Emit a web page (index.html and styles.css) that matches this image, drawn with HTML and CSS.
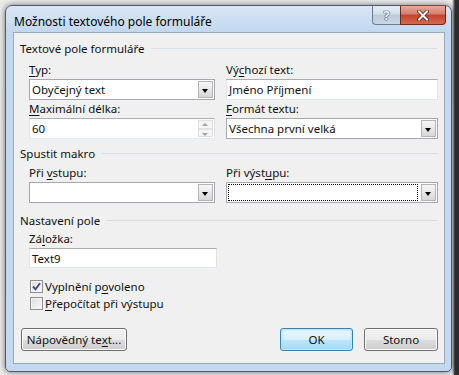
FILE: index.html
```html
<!DOCTYPE html>
<html lang="cs">
<head>
  <meta charset="UTF-8">
  <meta name="viewport" content="width=device-width, initial-scale=1.0">
  <title>Možnosti textového pole formuláře</title>
  <link rel="stylesheet" href="styles.css">
</head>
<body>

  <div class="window">
    <div class="titlebar">
      <span class="title">Možnosti textového pole formuláře</span>
      <div class="caption-buttons">
        <span class="cap-btn help">?</span>
        <span class="cap-btn close">
          <svg width="12" height="11" viewBox="0 0 12 11">
            <path d="M2 1.5 L10 9.5 M10 1.5 L2 9.5" stroke="#5a1a12" stroke-width="3.6" stroke-linecap="square" fill="none"/>
            <path d="M2 1.5 L10 9.5 M10 1.5 L2 9.5" stroke="#fff" stroke-width="2" stroke-linecap="square" fill="none"/>
          </svg>
        </span>
      </div>
    </div>

    <div class="client">
      <div class="group-title">Textové pole formuláře</div>
      <div class="grid first">
        <div class="field">
          <div class="label"><u>T</u>yp:</div>
          <div class="combo">
            <span class="value">Obyčejný text</span>
            <span class="drop"></span>
          </div>
        </div>
        <div class="field">
          <div class="label">Vý<u>c</u>hozí text:</div>
          <div class="textbox"><span class="value">Jméno Příjmení</span></div>
        </div>
        <div class="field">
          <div class="label"><u>M</u>aximální délka:</div>
          <div class="textbox spin">
            <span class="value">60</span>
            <span class="spin-btns">
              <span class="arrow up"></span>
              <span class="arrow down"></span>
            </span>
          </div>
        </div>
        <div class="field">
          <div class="label"><u>F</u>ormát textu:</div>
          <div class="combo">
            <span class="value">Všechna první velká</span>
            <span class="drop"></span>
          </div>
        </div>
      </div>

      <div class="group-title">Spustit makro</div>
      <div class="grid macro">
        <div class="field">
          <div class="label">Při <u>v</u>stupu:</div>
          <div class="combo">
            <span class="value"></span>
            <span class="drop"></span>
          </div>
        </div>
        <div class="field">
          <div class="label">Při výst<u>u</u>pu:</div>
          <div class="combo">
            <span class="value focused"></span>
            <span class="drop"></span>
          </div>
        </div>
      </div>

      <div class="group-title">Nastavení pole</div>
      <div class="grid settings">
        <div class="field">
          <div class="label">Zá<u>l</u>ožka:</div>
          <div class="textbox short"><span class="value">Text9</span></div>
        </div>
      </div>

      <div class="checks">
        <div class="check">
          <span class="box checked">
            <svg width="9" height="9" viewBox="0 0 9 9">
              <path d="M1 4.5 L3.5 7.2 L8 1.2" stroke="#3b4f86" stroke-width="1.9" fill="none"/>
            </svg>
          </span>
          <span>Vyplnění p<u>o</u>voleno</span>
        </div>
        <div class="check">
          <span class="box"></span>
          <span><u>P</u>řepočítat při výstupu</span>
        </div>
      </div>

      <div class="buttons">
        <span class="btn help-text">Nápovědný te<u>x</u>t...</span>
        <span class="spacer"></span>
        <span class="btn default">OK</span>
        <span class="btn">Storno</span>
      </div>
    </div>
  </div>

</body>
</html>
```

FILE: styles.css
```css
* {
  box-sizing: border-box;
}

body {
  margin: 0;
  height: 375px;
  overflow: hidden;
  background: linear-gradient(to right, rgba(0, 0, 0, 0) 452px, #2e2e2e 455px), #ececec;
  font-family: "Noto Sans", sans-serif;
  font-size: 11.5px;
  color: #111;
}

u {
  text-decoration: underline;
  text-underline-offset: 2px;
}

.window {
  display: flex;
  flex-direction: column;
  margin: 5px 0 0 5px;
  width: 447px;
  height: 367px;
  padding: 0 6px 7px 7px;
  border: 1px solid #4a5b6e;
  border-radius: 7px 7px 5px 5px;
  background: linear-gradient(to bottom, #d9e7f6 0, #c2d8ef 26px, #c4d9ef 100%);
  box-shadow: 0 0 6px rgba(0, 0, 0, 0.55);
}

/* title bar */
.titlebar {
  display: flex;
  justify-content: space-between;
  height: 26px;
}

.title {
  margin: 8px 0 0 1px;
  line-height: 15px;
  font-size: 12px;
  color: #000;
}

.caption-buttons {
  display: flex;
  height: 19px;
  margin-right: -1px;
}

.cap-btn {
  display: flex;
  justify-content: center;
  align-items: center;
  height: 19px;
  border: 1px solid #6d7d8f;
  border-top: none;
}

.help {
  width: 28px;
  border-right: none;
  border-radius: 0 0 0 4px;
  background: linear-gradient(to bottom, #e4ecf5 0, #d4dfeb 45%, #bccbdc 50%, #c9d7e6 100%);
  color: #f4f6f8;
  font-weight: bold;
  font-size: 13px;
  text-shadow: 0 0 1px #34465a, 0 0 1px #34465a, 0 0 1px #34465a;
}

.close {
  width: 46px;
  border-color: #6b2a1e;
  border-radius: 0 0 4px 0;
  background: linear-gradient(to bottom, #e8a89b 0, #d47f6c 45%, #c4442b 50%, #d46a4f 100%);
}

/* client area */
.client {
  display: flex;
  flex-direction: column;
  flex: 1;
  padding: 8px 5px 12px 6px;
  border: 1px solid #96aac0;
  background-color: #f0f0f0;
}

.group-title {
  display: flex;
  align-items: center;
  gap: 6px;
  height: 15px;
  line-height: 15px;
  margin-right: 1px;
}

.group-title::after {
  content: "";
  flex: 1;
  height: 1px;
  background-color: #d5dfe5;
}

.grid {
  display: grid;
  grid-template-columns: 186px 212px;
  column-gap: 11px;
  row-gap: 1px;
  padding-left: 9px;
  margin: 4px 0 7px;
}

.grid.first {
  margin-top: 6px;
}

.grid.macro {
  margin-bottom: 10px;
}

.grid.settings {
  margin-top: 3px;
}

.label {
  height: 16px;
  line-height: 16px;
  margin-bottom: 1px;
}

.combo,
.textbox {
  display: flex;
  align-items: stretch;
  height: 21px;
  border: 1px solid #a5a9ae;
  background-color: #fff;
}

.textbox {
  border-color: #abadb3 #dfe2e8 #e3e9ef #dfe2e8;
}

.textbox.short {
  height: 20px;
  width: 188px;
}

.value {
  flex: 1;
  padding-left: 2px;
  line-height: 19px;
  white-space: nowrap;
}

.value.focused {
  margin: 1px 2px 1px 1px;
  border: 1px dotted #000;
}

.drop {
  position: relative;
  width: 15px;
  margin: 1px;
  border: 1px solid #b4b4b4;
  background: linear-gradient(to bottom, #f6f6f6 0, #e8e8e8 50%, #d6d6d6 100%);
}

.drop::after {
  content: "";
  position: absolute;
  left: 3px;
  top: 7px;
  border-left: 3.5px solid transparent;
  border-right: 3.5px solid transparent;
  border-top: 4px solid #000;
}

.spin-btns {
  display: flex;
  flex-direction: column;
  width: 15px;
  margin: 1px;
}

.arrow {
  position: relative;
  flex: 1;
  border: 1px solid #e2e2e2;
  background-color: #f4f4f4;
}

.arrow::after {
  content: "";
  position: absolute;
  left: 3px;
  top: 2px;
  border-left: 3.5px solid transparent;
  border-right: 3.5px solid transparent;
}

.arrow.up::after {
  border-bottom: 3px solid #a0a0a0;
}

.arrow.down::after {
  top: 3px;
  border-top: 3px solid #a0a0a0;
}

/* check boxes */
.checks {
  display: flex;
  flex-direction: column;
  margin: 3px 0 0 10px;
}

.check {
  display: flex;
  align-items: center;
  gap: 2px;
  height: 17px;
}

.box {
  display: flex;
  justify-content: center;
  align-items: center;
  width: 13px;
  height: 13px;
  border: 1px solid #8e8f8f;
  background: linear-gradient(135deg, #dcdcdc 0, #fbfbfb 100%);
  box-shadow: inset 0 0 0 1px #f4f4f4;
}

/* bottom buttons */
.buttons {
  display: flex;
  gap: 11px;
  margin: auto 1px 0 1px;
}

.spacer {
  flex: 1;
}

.btn {
  display: flex;
  justify-content: center;
  align-items: center;
  width: 74px;
  height: 23px;
  border: 1px solid #707070;
  border-radius: 3px;
  background: linear-gradient(to bottom, #f2f2f2 0, #ebebeb 50%, #dddddd 50%, #cfcfcf 100%);
  box-shadow: inset 0 0 0 1px #fbfbfb;
}

.btn.help-text {
  width: 106px;
}

.btn.default {
  width: 73px;
  border-color: #3c7fb1;
  background: linear-gradient(to bottom, #eaf6fd 0, #d9f0fc 50%, #bee6fd 50%, #a7d9f5 100%);
  box-shadow: inset 0 0 0 1px #c5e7f9, inset 0 0 2px 1px #9fd4f2;
}
```
